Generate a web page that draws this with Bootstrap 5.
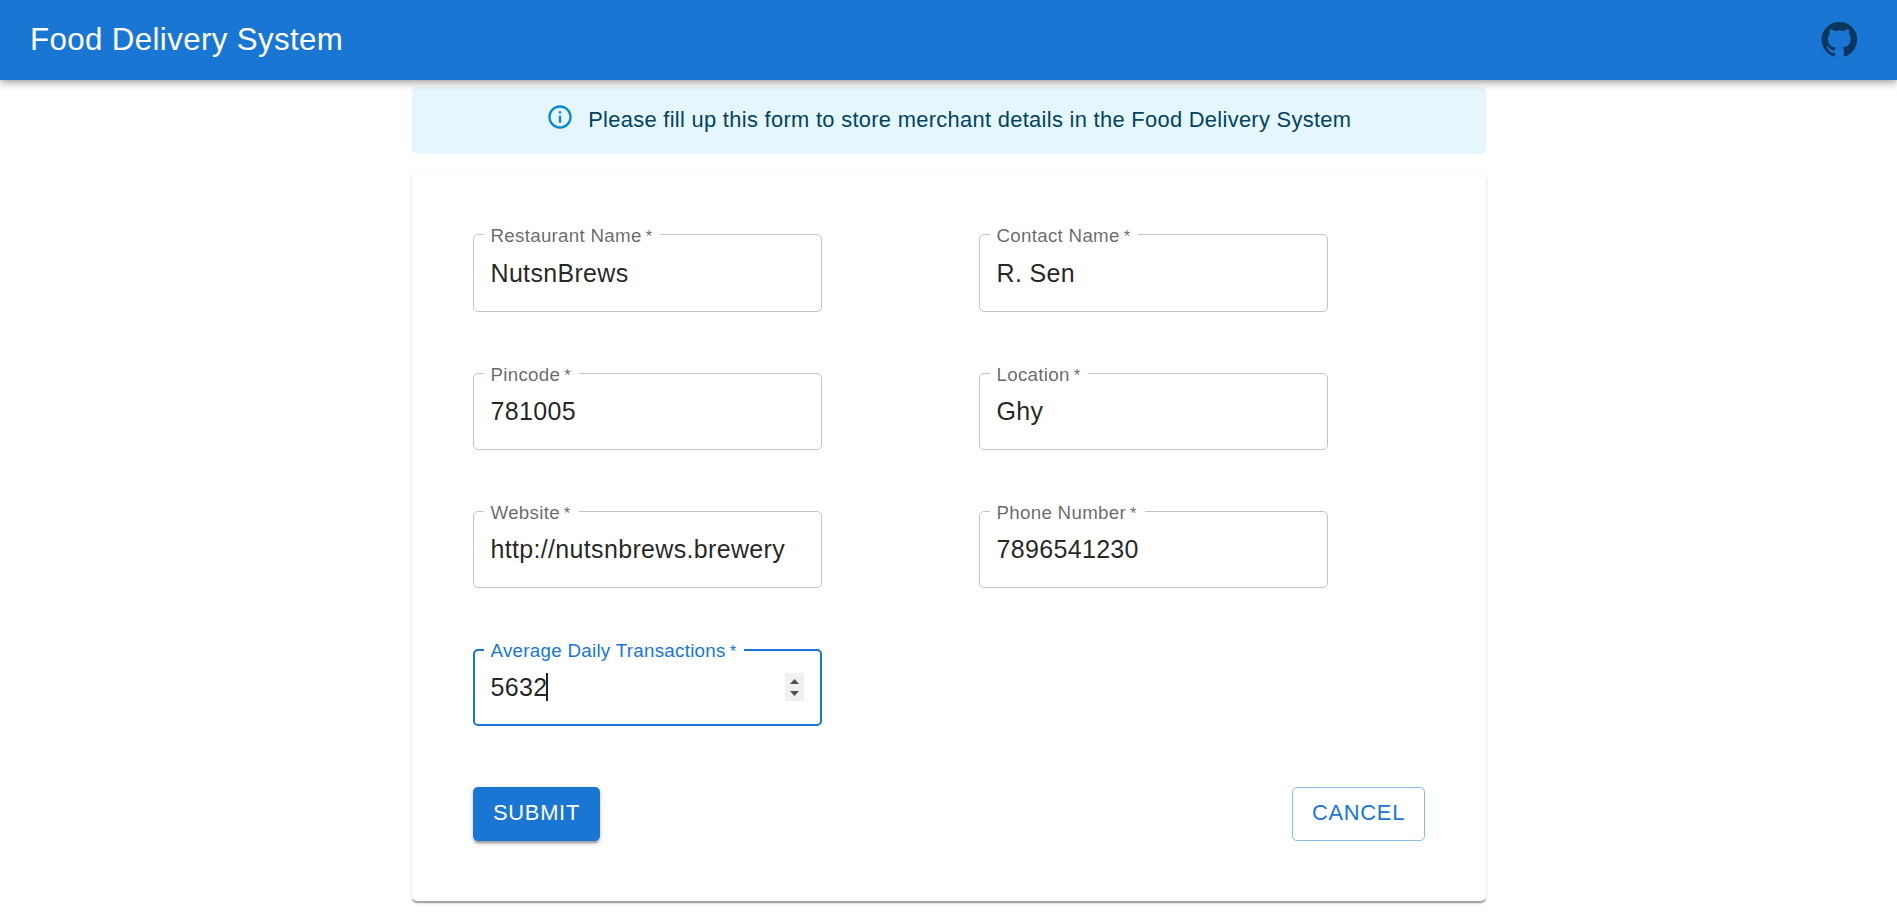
<!DOCTYPE html>
<html lang="en">
<head>
<meta charset="utf-8">
<title>Food Delivery System</title>
<meta name="viewport" content="width=device-width, initial-scale=1">
<link href="https://cdn.jsdelivr.net/npm/bootstrap@5.3.0/dist/css/bootstrap.min.css" rel="stylesheet">
<style>
  body { font-family: "Liberation Sans", Arial, sans-serif; font-size: 25px; color: rgba(0,0,0,.87); }
  .topbar { height: 80px; padding: 0 30px; background: #1976d2; z-index: 5;
    box-shadow: 0 2.5px 5px -1.25px rgba(0,0,0,.2), 0 5px 6.25px rgba(0,0,0,.14), 0 1.25px 12.5px rgba(0,0,0,.12); }
  .topbar .navbar-brand { font-size: 31.25px; letter-spacing: .38px; line-height: 50px; color: #fff; padding: 0; margin: 0; }
  .repo-link { color: rgba(0,0,0,.54); margin: 0 9px 2px 0; }
  .page { width: 1074px; padding: 7px 0 12px; }
  .notice { height: 67px; background: #e5f6fd; color: #014361; border: 0; border-radius: 5px; padding: 0; margin: 0 0 20.45px;
    font-size: 21.875px; letter-spacing: .315px; gap: 14.5px; }
  .notice svg { color: #0288d1; margin-bottom: 7px; }
  .sheet { border: 0; border-radius: 5px; padding: 60px 61px;
    box-shadow: 0 2.5px 1.25px -1.25px rgba(0,0,0,.2), 0 1.25px 1.25px rgba(0,0,0,.14), 0 1.25px 3.75px rgba(0,0,0,.12); }
  .fields { display: grid; grid-template-columns: 349px 349px; column-gap: 157px; row-gap: 60.95px; }
  .field .form-control { height: 77.3px; border: 1px solid #c4c4c4; border-radius: 5px; padding: 0 17px; color: rgba(0,0,0,.87);
    font-size: 25px; letter-spacing: .33px; }
  .field label { left: 11px; top: -10px; padding: 0 8px 0 7px; background: #fff; font-size: 18.75px; line-height: 24px;
    letter-spacing: .28px; color: rgba(0,0,0,.6); white-space: nowrap; }
  .field label span { font-size: 16.5px; margin-left: -1.5px; }
  .field.active .form-control { border: 2px solid #1976d2; padding: 0 16px; }
  .field.active label { color: #1976d2; }
  .caret { left: 73px; top: 24px; width: 2px; height: 28px; background: #222; }
  .stepper { right: 18px; top: 24px; width: 19px; height: 28px; background: #f0f0f0; }
  .actions { margin-top: 60.5px; }
  .actions .btn { font-size: 21.875px; line-height: 38px; letter-spacing: .76px; padding: 7px 19px 9px 20px; border: 0; border-radius: 5px; white-space: nowrap; }
  .btn-submit { background: #1976d2; color: #fff; width: 127px;
    box-shadow: 0 3.75px 1.25px -2.5px rgba(0,0,0,.2), 0 2.5px 2.5px rgba(0,0,0,.14), 0 1.25px 6.25px rgba(0,0,0,.12); }
  .actions .btn-cancel { border: 1px solid #8cbbe9; color: #1976d2; width: 133px; padding: 6px 0 8px 1px; }
</style>
</head>
<body>
<nav class="topbar navbar position-relative d-flex flex-nowrap align-items-center justify-content-between">
  <span class="navbar-brand">Food Delivery System</span>
  <a class="repo-link d-flex" href="#" aria-label="GitHub"><svg width="38.5" height="38.5" viewBox="0 0 24 24" fill="currentColor"><path d="M12 1.27a11 11 0 00-3.48 21.46c.55.09.73-.28.73-.55v-1.84c-3.03.64-3.67-1.46-3.67-1.46-.55-1.29-1.28-1.65-1.28-1.65-.92-.65.1-.65.1-.65 1.1 0 1.73 1.1 1.73 1.1.92 1.65 2.57 1.2 3.21.92a2 2 0 01.64-1.47c-2.47-.27-5.04-1.19-5.04-5.5 0-1.1.46-2.1 1.2-2.84a3.76 3.76 0 010-2.93s.91-.28 3.11 1.1c1.8-.49 3.7-.49 5.5 0 2.1-1.38 3.02-1.1 3.02-1.1a3.76 3.76 0 01.1 2.93c.83.74 1.2 1.74 1.2 2.94 0 4.21-2.57 5.13-5.04 5.4.45.37.82.92.82 2.02v3.03c0 .27.1.64.73.55A11 11 0 0012 1.27"/></svg></a>
</nav>
<main class="page mx-auto">
  <div class="notice alert d-flex align-items-center justify-content-center" role="alert">
    <svg width="28" height="28" viewBox="0 0 24 24" fill="currentColor"><path d="M11 7h2v2h-2zm0 4h2v6h-2zm1-9C6.480 2 2 6.480 2 12s4.480 10 10 10 10-4.480 10-10S17.520 2 12 2zm0 18c-4.410 0-8-3.590-8-8s3.590-8 8-8 8 3.590 8 8-3.590 8-8 8z"/></svg>
    <div>Please fill up this form to store merchant details in the Food Delivery System</div>
  </div>
  <form class="sheet card">
    <div class="fields">
      <div class="field position-relative"><input class="form-control" id="name" value="NutsnBrews"><label class="position-absolute" for="name">Restaurant Name <span>*</span></label></div>
      <div class="field position-relative"><input class="form-control" id="contact" value="R. Sen"><label class="position-absolute" for="contact">Contact Name <span>*</span></label></div>
      <div class="field position-relative"><input class="form-control" id="pin" value="781005"><label class="position-absolute" for="pin">Pincode <span>*</span></label></div>
      <div class="field position-relative"><input class="form-control" id="loc" value="Ghy"><label class="position-absolute" for="loc">Location <span>*</span></label></div>
      <div class="field position-relative"><input class="form-control" id="site" value="http://nutsnbrews.brewery"><label class="position-absolute" for="site">Website <span>*</span></label></div>
      <div class="field position-relative"><input class="form-control" id="phone" value="7896541230"><label class="position-absolute" for="phone">Phone Number <span>*</span></label></div>
      <div class="field active position-relative"><input class="form-control" id="avg" value="5632"><label class="position-absolute" for="avg">Average Daily Transactions <span>*</span></label>
        <span class="caret position-absolute"></span>
        <svg class="stepper position-absolute" viewBox="0 0 19 28" fill="#505050"><path d="M5 11l4.500-5 4.500 5zM5 18h9l-4.500 5z"/></svg>
      </div>
    </div>
    <div class="actions d-flex justify-content-between">
      <button type="button" class="btn btn-submit">SUBMIT</button>
      <button type="button" class="btn btn-cancel">CANCEL</button>
    </div>
  </form>
</main>
<script src="https://cdn.jsdelivr.net/npm/bootstrap@5.3.0/dist/js/bootstrap.bundle.min.js"></script>
</body>
</html>
